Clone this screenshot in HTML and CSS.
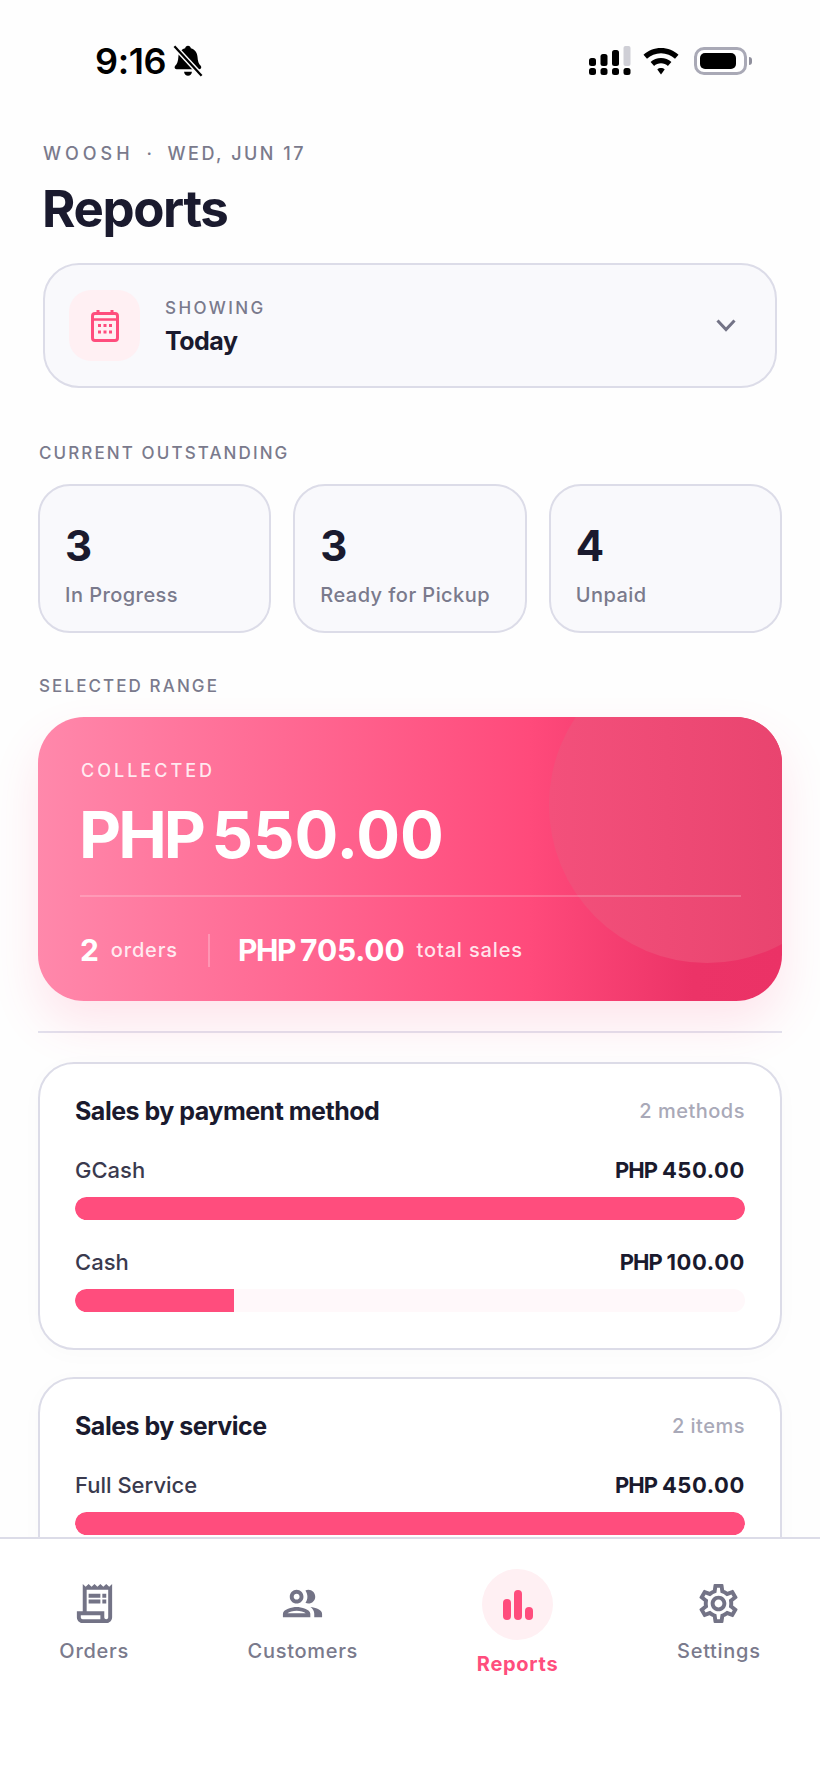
FILE: index.html
```html
<!DOCTYPE html>
<html lang="en">
<head>
<meta charset="utf-8">
<title>Reports</title>
<link rel="stylesheet" href="styles.css">
</head>
<body>
<div class="app">
  <main class="main">
    <div class="status">
      <div class="status-left">
        <span class="time">9:16</span>
        <svg class="bell" viewBox="0 0 28 30" width="32" height="34"><path d="M14 1.500c1.400 0 2.300.9 2.500 2.200 3.700 1 5.700 4 5.900 7.800.2 3.700 1 6 2.800 7.800.8.800.8 3-1.200 3H3.900c-2 0-2-2.200-1.200-3 1.800-1.800 2.600-4.100 2.800-7.800.2-3.800 2.200-6.800 6-7.800.2-1.300 1.100-2.200 2.500-2.200z" fill="#000"/><path d="M10.500 24.500h7c-.3 2.200-1.700 3.500-3.500 3.500s-3.200-1.300-3.500-3.500z" fill="#000"/><path d="M2 2l24 26" stroke="#fff" stroke-width="4.500"/><path d="M2 2l24 26" stroke="#000" stroke-width="2"/></svg>
      </div>
      <div class="status-right">
        <svg viewBox="0 0 42 30" width="42" height="30"><g fill="#000"><rect x="0" y="12" width="7" height="8" rx="2.500"/><rect x="11.500" y="8" width="7" height="12" rx="2.500"/><rect x="23" y="4" width="7" height="16" rx="2.500"/><rect x="0" y="22" width="7" height="7" rx="2.500"/><rect x="11.500" y="22" width="7" height="7" rx="2.500"/><rect x="23" y="22" width="7" height="7" rx="2.500"/><rect x="34.500" y="22" width="7" height="7" rx="2.500"/></g><rect x="34.500" y="0" width="7" height="20" rx="2" fill="#cfcfd6"/></svg>
        <svg viewBox="0 0 36 27" width="36" height="27"><path d="M18 0c6.800 0 12.900 2.500 17.500 6.800l-3.500 4C28.300 7.400 23.400 5.300 18 5.300S7.700 7.400 4 10.800L.5 6.800C5.100 2.500 11.200 0 18 0z"/><path d="M18 10c4 0 7.600 1.500 10.400 4l-3.500 4c-1.800-1.700-4.300-2.700-6.900-2.700s-5.100 1-6.900 2.700l-3.500-4C10.400 11.500 14 10 18 10z"/><path d="M18 20c1.400 0 2.700.5 3.700 1.400L18 26.500l-3.700-5.100c1-.9 2.300-1.400 3.700-1.400z"/></svg>
        <span class="battery"><span class="battery-fill"></span></span>
        <span class="battery-nub"></span>
      </div>
    </div>

    <header class="head">
      <div class="eyebrow"><span class="brand">WOOSH</span><span class="dot">·</span>WED, JUN 17</div>
      <h1 class="title">Reports</h1>
      <div class="picker">
        <div class="picker-icon">
          <svg viewBox="0 0 28 32" width="28" height="32" fill="none" stroke="#ff4d7d"><rect x="1.500" y="3.500" width="25" height="27" rx="2.500" stroke-width="3"/><path d="M7 0v5M21 0v5" stroke-width="3"/><path d="M2 9.500h24" stroke-width="2.500"/><path d="M7 15.500h3M12.500 15.500h3M18 15.500h3M7 22h3M12.500 22h3M18 22h3" stroke-width="3"/></svg>
        </div>
        <div class="picker-text">
          <div class="picker-label">SHOWING</div>
          <div class="picker-value">Today</div>
        </div>
        <svg class="chev" viewBox="0 0 20 13" width="20" height="13" fill="none" stroke="#737386" stroke-width="3"><path d="M1.500 1.500L10 10.500l8.500-9"/></svg>
      </div>
    </header>

    <section class="body">
      <div class="section-label first">CURRENT OUTSTANDING</div>
      <div class="stats">
        <div class="stat"><div class="stat-num">3</div><div class="stat-label">In Progress</div></div>
        <div class="stat"><div class="stat-num">3</div><div class="stat-label">Ready for Pickup</div></div>
        <div class="stat"><div class="stat-num">4</div><div class="stat-label">Unpaid</div></div>
      </div>

      <div class="section-label second">SELECTED RANGE</div>
      <div class="hero">
        <span class="hero-circle"></span>
        <div class="hero-label">COLLECTED</div>
        <div class="hero-amount"><span class="cur">PHP</span> 550.00</div>
        <div class="hero-rule"></div>
        <div class="hero-row">
          <span class="hero-strong">2</span><span class="hero-small">orders</span>
          <span class="hero-sep"></span>
          <span class="hero-strong"><span class="cur">PHP</span> 705.00</span><span class="hero-small">total sales</span>
        </div>
      </div>

      <div class="rule"></div>

      <div class="card">
        <div class="card-head"><span class="card-title">Sales by payment method</span><span class="card-meta">2 methods</span></div>
        <div class="row"><span class="row-name">GCash</span><span class="row-val"><span class="cur">PHP</span> 450.00</span></div>
        <div class="track"><div class="fill fill-full" style="width:100%"></div></div>
        <div class="row row-next"><span class="row-name">Cash</span><span class="row-val"><span class="cur">PHP</span> 100.00</span></div>
        <div class="track"><div class="fill" style="width:23.7%"></div></div>
      </div>

      <div class="card">
        <div class="card-head"><span class="card-title">Sales by service</span><span class="card-meta">2 items</span></div>
        <div class="row"><span class="row-name">Full Service</span><span class="row-val"><span class="cur">PHP</span> 450.00</span></div>
        <div class="track"><div class="fill fill-full" style="width:100%"></div></div>
      </div>
    </section>
  </main>

  <nav class="nav">
    <div class="tab">
      <svg class="tab-icon" viewBox="0 0 24 24"><path d="M19.500 3.500L18 2l-1.500 1.500L15 2l-1.500 1.500L12 2l-1.500 1.500L9 2 7.500 3.500 6 2v14H3v3c0 1.660 1.340 3 3 3h12c1.660 0 3-1.340 3-3V2l-1.500 1.500zM15 20H6c-.55 0-1-.45-1-1v-1h10v2zm4-1c0 .55-.45 1-1 1s-1-.45-1-1v-3H8V5h11v14zM9 7h6v2H9zM16 7h2v2h-2zM9 10h6v2H9zM16 10h2v2h-2z"/></svg>
      <span class="tab-label">Orders</span>
    </div>
    <div class="tab">
      <svg class="tab-icon" viewBox="0 0 24 24"><path d="M9 13.750c-2.340 0-7 1.170-7 3.500V19h14v-1.750c0-2.330-4.660-3.500-7-3.500zM4.340 17c.84-.58 2.870-1.250 4.660-1.250s3.820.67 4.660 1.250H4.340zM9 12c1.930 0 3.500-1.570 3.500-3.500S10.930 5 9 5 5.500 6.570 5.500 8.500 7.070 12 9 12zm0-5c.83 0 1.500.67 1.500 1.500S9.830 10 9 10s-1.500-.67-1.500-1.500S8.170 7 9 7zm7.040 6.810c1.160.84 1.960 1.960 1.960 3.440V19h4v-1.750c0-2.020-3.500-3.170-5.960-3.440zM15 12c1.930 0 3.500-1.570 3.500-3.500S16.930 5 15 5c-.54 0-1.040.13-1.500.35.63.89 1 1.980 1 3.150s-.37 2.260-1 3.150c.46.22.96.35 1.500.35z"/></svg>
      <span class="tab-label">Customers</span>
    </div>
    <div class="tab tab-active">
      <span class="tab-bubble">
        <svg viewBox="0 0 32 32" width="32" height="32" fill="#ff4d7d"><rect x="1" y="10" width="8" height="21" rx="4"/><rect x="12" y="1" width="8" height="30" rx="4"/><rect x="23" y="18" width="8" height="13" rx="4"/></svg>
      </span>
      <span class="tab-label">Reports</span>
    </div>
    <div class="tab">
      <svg class="tab-icon" viewBox="0 0 24 24"><path d="M19.430 12.980c.04-.32.07-.64.07-.98 0-.34-.03-.66-.07-.98l2.110-1.650c.19-.15.24-.42.12-.64l-2-3.460c-.09-.16-.26-.25-.44-.25-.06 0-.12.01-.17.03l-2.490 1c-.52-.4-1.080-.73-1.690-.98l-.38-2.650C14.460 2.180 14.250 2 14 2h-4c-.25 0-.46.18-.49.42l-.38 2.650c-.61.25-1.170.59-1.690.98l-2.490-1c-.06-.02-.12-.03-.18-.03-.17 0-.34.09-.43.25l-2 3.460c-.13.22-.07.49.12.64l2.110 1.650c-.04.32-.07.65-.07.98 0 .33.03.66.07.98l-2.110 1.650c-.19.15-.24.42-.12.64l2 3.460c.09.16.26.25.44.25.06 0 .12-.01.17-.03l2.490-1c.52.4 1.080.73 1.690.98l.38 2.650c.03.24.24.42.49.42h4c.25 0 .46-.18.49-.42l.38-2.650c.61-.25 1.170-.59 1.690-.98l2.490 1c.06.02.12.03.18.03.17 0 .34-.09.43-.25l2-3.460c.12-.22.07-.49-.12-.64l-2.110-1.650zm-1.980-1.710c.04.31.05.52.05.73 0 .21-.02.43-.05.73l-.14 1.130.89.7 1.080.84-.7 1.210-1.270-.51-1.040-.42-.9.68c-.43.32-.84.56-1.250.73l-1.060.43-.16 1.130-.2 1.350h-1.400l-.19-1.350-.16-1.130-1.060-.43c-.43-.18-.83-.41-1.230-.71l-.91-.7-1.060.43-1.270.51-.7-1.210 1.080-.84.89-.7-.14-1.130c-.03-.31-.05-.54-.05-.74s.02-.43.05-.73l.14-1.130-.89-.7-1.080-.84.7-1.210 1.270.51 1.040.42.9-.68c.43-.32.84-.56 1.250-.73l1.060-.43.16-1.130.2-1.350h1.390l.19 1.350.16 1.130 1.060.43c.43.18.83.41 1.230.71l.91.7 1.060-.43 1.270-.51.7 1.210-1.070.85-.89.7.14 1.130zM12 8c-2.210 0-4 1.790-4 4s1.790 4 4 4 4-1.790 4-4-1.790-4-4-4zm0 6c-1.100 0-2-.9-2-2s.9-2 2-2 2 .9 2 2-.9 2-2 2z"/></svg>
      <span class="tab-label">Settings</span>
    </div>
  </nav>
</div>
</body>
</html>
```

FILE: styles.css
```css
* { box-sizing: border-box; }
html, body { margin: 0; padding: 0; }
body { font-family: Inter, "Liberation Sans", sans-serif; background: #fff; color: #1a1a2e; }

.app { width: 820px; height: 1777px; display: flex; flex-direction: column; overflow: hidden; background: #fefefe; }
.main { flex: 1; min-height: 0; overflow: hidden; }

.status { height: 141px; padding: 46px 68px 0 95px; display: flex; justify-content: space-between; align-items: flex-start; }
.status-left { display: flex; align-items: center; gap: 6px; height: 30px; }
.time { font-size: 36px; font-weight: 600; line-height: 30px; color: #000; letter-spacing: -0.4px; }
.status-right { display: flex; align-items: center; height: 30px; }
.status-right svg:nth-child(2) { margin: 0 15px 0 12px; }
.battery { width: 53px; height: 28px; border: 3px solid #a9a9b6; border-radius: 10px; padding: 3px; display: block; background: #fff; }
.battery-fill { display: block; width: 36px; height: 100%; background: #000; border-radius: 5px; }
.battery-nub { width: 3px; height: 8px; background: #8f8f9c; border-radius: 0 3px 3px 0; margin-left: 2px; }

.head { padding: 0 43px; }
.eyebrow { font-size: 18px; line-height: 26px; font-weight: 500; letter-spacing: 2.5px; color: #7a7a8c; }
.brand { letter-spacing: 4px; }
.dot { margin: 0 13px 0 13px; }
.title { margin: 12px 0 0 -1px; font-size: 51px; line-height: 60px; font-weight: 700; letter-spacing: -1.4px; color: #1a1a2e; }
.picker { margin-top: 24px; height: 125px; background: #f9f9fc; border: 2px solid #dcdce8; border-radius: 36px; display: flex; align-items: center; padding: 0 39px 0 24px; }
.picker-icon { width: 71px; height: 71px; border-radius: 22px; background: #fff0f3; display: flex; align-items: center; justify-content: center; flex: none; }
.picker-text { margin-left: 25px; flex: 1; padding-top: 2px; }
.picker-label { font-size: 17px; line-height: 24px; font-weight: 500; letter-spacing: 2.4px; color: #7a7a8c; }
.picker-value { font-size: 25px; line-height: 34px; font-weight: 700; letter-spacing: -0.5px; color: #1a1a2e; margin-top: 4px; }
.chev { flex: none; }

.body { padding: 0 38px; }
.section-label { font-size: 17px; line-height: 24px; font-weight: 500; letter-spacing: 2.1px; color: #7a7a8c; padding-left: 1px; }
.section-label.first { margin-top: 53px; }
.section-label.second { margin-top: 41px; }

.stats { margin-top: 19px; display: grid; grid-template-columns: repeat(3, 1fr); gap: 22px; }
.stat { height: 149px; background: #f9f9fc; border: 2px solid #dcdce8; border-radius: 32px; padding: 35px 0 0 25px; }
.stat-num { font-size: 42px; line-height: 50px; font-weight: 700; color: #1a1a2e; }
.stat-label { margin-top: 10px; font-size: 20px; line-height: 28px; font-weight: 500; letter-spacing: 0.45px; color: #7a7a8c; }

.hero { position: relative; overflow: hidden; margin-top: 19px; height: 284px; border-radius: 46px; padding: 42px 41px 0 43px; color: #fff; background: linear-gradient(90deg, #ff88ab 0%, #ff4a7b 66%, #ec3367 88%, #eb3266 100%); box-shadow: 0 24px 48px rgba(255, 77, 125, 0.14); }
.hero-circle { position: absolute; left: 511px; top: -70px; width: 316px; height: 316px; border-radius: 50%; background: linear-gradient(90deg, #f3507b, #e9446f 75%); }
.hero-label { position: relative; font-size: 18px; line-height: 24px; font-weight: 500; letter-spacing: 3px; color: rgba(255, 255, 255, 0.85); }
.hero-amount { position: relative; margin: 17px 0 0 -2px; font-size: 65px; line-height: 70px; font-weight: 700; letter-spacing: 0; word-spacing: -7px; }
.cur { letter-spacing: -0.045em; }
.hero-rule { position: relative; margin-top: 25px; height: 2px; background: rgba(255, 255, 255, 0.2); margin-left: -1px; }
.hero-row { position: relative; margin: 35px 0 0 -1px; height: 36px; display: flex; align-items: center; }
.hero-strong { font-size: 30px; font-weight: 700; line-height: 36px; letter-spacing: -0.15px; word-spacing: -2px; }
.hero-small { font-size: 20px; line-height: 36px; font-weight: 500; letter-spacing: 0.85px; color: rgba(255, 255, 255, 0.85); margin-left: 12px; }
.hero-sep { width: 2px; height: 33px; background: rgba(255, 255, 255, 0.25); margin: 0 28px 0 30px; }

.rule { margin-top: 30px; height: 2px; background: #e2e2ee; }

.card { margin-top: 27px; background: #fff; border: 2px solid #dcdce8; border-radius: 36px; padding: 31px 35px 36px 35px; box-shadow: 0 4px 24px rgba(26, 26, 46, 0.02); }
.rule + .card { margin-top: 29px; }
.card-head { display: flex; justify-content: space-between; align-items: center; height: 32px; }
.card-title { font-size: 25px; line-height: 32px; font-weight: 700; letter-spacing: -0.5px; color: #1a1a2e; }
.card-meta { font-size: 20px; line-height: 32px; font-weight: 500; letter-spacing: 0.5px; color: #a9a9b8; }
.row { margin-top: 29px; display: flex; justify-content: space-between; align-items: center; height: 28px; }
.row-next { margin-top: 28px; }
.row-name { font-size: 22px; font-weight: 500; line-height: 28px; color: #3a3a4e; }
.row-val { font-size: 22px; font-weight: 700; line-height: 28px; letter-spacing: 0.6px; word-spacing: -1px; color: #1a1a2e; }
.track { margin-top: 13px; height: 23px; border-radius: 12px; overflow: hidden; background: #fff8fa; }
.fill { height: 100%; background: #ff4d7d; border-radius: 12px 0 0 12px; }
.fill-full { border-radius: 12px; }

.nav { flex: none; height: 240px; border-top: 2px solid #dcdce8; background: #fff; padding-top: 30px; display: flex; justify-content: space-around; align-items: flex-start; }
.tab { display: flex; flex-direction: column; align-items: center; }
.tab-icon { width: 47px; height: 47px; margin-top: 11px; fill: #737386; display: block; }
.tab-label { margin-top: 12px; font-size: 20px; line-height: 24px; font-weight: 500; letter-spacing: 0.7px; color: #7a7a8c; white-space: nowrap; }
.tab-bubble { width: 71px; height: 71px; border-radius: 50%; background: #fff0f3; display: flex; align-items: center; justify-content: center; }
.tab-active .tab-label { margin-top: 12px; font-weight: 700; color: #ff4d7d; }
```
